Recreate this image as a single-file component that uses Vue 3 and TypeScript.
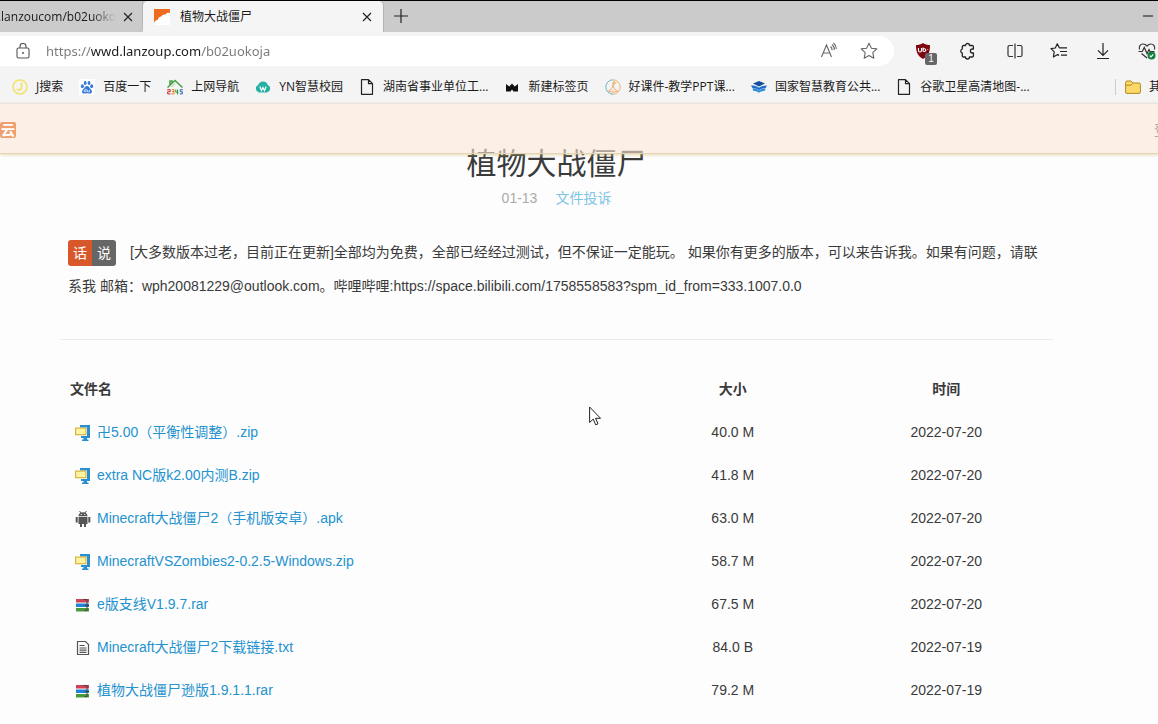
<script setup lang="ts">
import { ref } from 'vue'

type BookmarkIcon = 'j' | 'paw' | 'house' | 'cloud' | 'page' | 'crown' | 'ring' | 'book'
type FileKind = 'zip' | 'apk' | 'rar' | 'txt'

interface Bookmark {
  icon: BookmarkIcon
  label: string
}

interface FileRow {
  kind: FileKind
  name: string
  size: string
  date: string
}

const url = ref('https://wwd.lanzoup.com/b02uokoja')

const bookmarks: Bookmark[] = [
  { icon: 'j', label: 'J搜索' },
  { icon: 'paw', label: '百度一下' },
  { icon: 'house', label: '上网导航' },
  { icon: 'cloud', label: 'YN智慧校园' },
  { icon: 'page', label: '湖南省事业单位工...' },
  { icon: 'crown', label: '新建标签页' },
  { icon: 'ring', label: '好课件-教学PPT课...' },
  { icon: 'book', label: '国家智慧教育公共...' },
  { icon: 'page', label: '谷歌卫星高清地图-...' },
]

const files: FileRow[] = [
  { kind: 'zip', name: '卍5.00（平衡性调整）.zip', size: '40.0 M', date: '2022-07-20' },
  { kind: 'zip', name: 'extra NC版k2.00内测B.zip', size: '41.8 M', date: '2022-07-20' },
  { kind: 'apk', name: 'Minecraft大战僵尸2（手机版安卓）.apk', size: '63.0 M', date: '2022-07-20' },
  { kind: 'zip', name: 'MinecraftVSZombies2-0.2.5-Windows.zip', size: '58.7 M', date: '2022-07-20' },
  { kind: 'rar', name: 'e版支线V1.9.7.rar', size: '67.5 M', date: '2022-07-20' },
  { kind: 'txt', name: 'Minecraft大战僵尸2下载链接.txt', size: '84.0 B', date: '2022-07-19' },
  { kind: 'rar', name: '植物大战僵尸逊版1.9.1.1.rar', size: '79.2 M', date: '2022-07-19' },
]
</script>

<template>
  <div class="window">
    <header class="chrome">
      <div class="tabs">
        <div class="tab tab-back">
          <span class="tab-clip"><span class="tab-url">d.lanzoucom/b02uoko</span></span>
          <button class="icon-btn close" type="button" aria-label="关闭标签页">
            <svg width="10" height="10" viewBox="0 0 10 10"><path d="M1 1l8 8M9 1l-8 8" stroke="#222" stroke-width="1.2" /></svg>
          </button>
        </div>
        <div class="tab tab-active">
          <svg width="16" height="16" viewBox="0 0 16 16">
            <rect width="16" height="16" fill="#fff" />
            <path d="M0 0h16v4c-2-.6-3.500 0-4.500 1.600C9.500 5 8 6 7.500 7.600 5.500 7.500 4 9 4 10.800 2 11 .8 12 0 14z" fill="#ee6a1c" />
          </svg>
          <span class="tab-title">植物大战僵尸</span>
          <button class="icon-btn close" type="button" aria-label="关闭标签页">
            <svg width="10" height="10" viewBox="0 0 10 10"><path d="M1 1l8 8M9 1l-8 8" stroke="#222" stroke-width="1.2" /></svg>
          </button>
        </div>
        <button class="icon-btn new-tab" type="button" aria-label="新建标签页">
          <svg width="14" height="14" viewBox="0 0 14 14"><path d="M7 0v14M0 7h14" stroke="#222" stroke-width="1.2" /></svg>
        </button>
        <button class="icon-btn minimize" type="button" aria-label="最小化">
          <svg width="10" height="2" viewBox="0 0 10 2"><path d="M0 1h10" stroke="#111" /></svg>
        </button>
      </div>

      <div class="toolbar">
        <div class="address">
          <svg width="14" height="16" viewBox="0 0 14 16" fill="none" stroke="#555" stroke-width="1.1">
            <rect x="1" y="5" width="12" height="10" rx="1.500" />
            <path d="M4 5V3.500a3 3 0 0 1 6 0V5" />
            <circle cx="7" cy="10" r="1" fill="#555" stroke="none" />
          </svg>
          <input v-model="url" class="url" type="text" aria-label="地址栏" spellcheck="false" />
          <button class="icon-btn" type="button" aria-label="大声朗读">
            <svg width="18" height="18" viewBox="0 0 18 18" fill="none" stroke="#666" stroke-width="1.1">
              <path d="M1.500 15L6.500 3l5 12M3.200 11h6.600M10.500 4.500c1.200 1 1.600 2.200 1.600 3.800M12 2.500c1.800 1.500 2.400 3.200 2.400 5.500M13.500 1c1.800 1.500 2.800 3.500 2.900 6" />
            </svg>
          </button>
          <button class="icon-btn" type="button" aria-label="收藏此页">
            <svg width="18" height="18" viewBox="0 0 18 18" fill="none" stroke="#666" stroke-width="1.1" stroke-linejoin="round">
              <path d="M9 1.200l2.400 5 5.400.7-4 3.800 1 5.500L9 13.500l-4.800 2.700 1-5.500-4-3.800 5.400-.7z" />
            </svg>
          </button>
        </div>
        <div class="actions">
          <button class="icon-btn blocker" type="button" aria-label="内容拦截">
            <svg width="16" height="16" viewBox="0 0 16 16">
              <path d="M8 0c2 1.500 4.500 2 7 2 0 7-1.500 11-7 14C2.500 13 1 9 1 2c2.500 0 5-.5 7-2z" fill="#800610" />
              <path d="M3.500 5v2.500a1.500 1.500 0 0 0 3 0V5M8 4.500v4M8 7a1.400 1.400 0 1 1 0 .2M12.500 6.500h.6" fill="none" stroke="#fff" stroke-width="1.1" />
            </svg>
            <span class="count">1</span>
          </button>
          <button class="icon-btn" type="button" aria-label="扩展">
            <svg width="18" height="18" viewBox="0 0 18 18" fill="none" stroke="#222" stroke-width="1.3" stroke-linejoin="round">
              <path d="M5.500 3.500h2a2 2 0 0 1 4 0h2.700a1.200 1.200 0 0 1 1.200 1.200V7h-1a2 2 0 0 0 0 4h1v2.800a1.200 1.200 0 0 1-1.200 1.200h-2.700a2 2 0 0 1-4 0h-2a1.200 1.200 0 0 1-1.200-1.200v-2.600a2.200 2.200 0 0 1 0-4.200V4.700a1.200 1.200 0 0 1 1.200-1.200z" />
            </svg>
          </button>
          <span class="divider"></span>
          <button class="icon-btn" type="button" aria-label="拆分屏幕">
            <svg width="18" height="18" viewBox="0 0 18 18" fill="none" stroke="#333" stroke-width="1.2">
              <path d="M7 3.500H3.500A1.500 1.500 0 0 0 2 5v8a1.500 1.500 0 0 0 1.500 1.500H7M11 3.500h3.500A1.500 1.500 0 0 1 16 5v8a1.500 1.500 0 0 1-1.500 1.500H11M9 1.500v15" />
            </svg>
          </button>
          <button class="icon-btn" type="button" aria-label="收藏夹">
            <svg width="18" height="18" viewBox="0 0 18 18" fill="none" stroke="#222" stroke-width="1.2" stroke-linejoin="round">
              <path d="M10.500 5.800H9.300L7.300 1.800 5.300 6 1 6.700l3.200 3.200-.8 5.100 4.200-2.400 1.500.8M10.500 5.800h6.500M10 9.500h7M11 13.200h6" />
            </svg>
          </button>
          <button class="icon-btn" type="button" aria-label="下载">
            <svg width="18" height="18" viewBox="0 0 18 18" fill="none" stroke="#222" stroke-width="1.2">
              <path d="M9 1v12M4 8.300l5 5 5-5M3 16.500h12" />
            </svg>
          </button>
          <button class="icon-btn" type="button" aria-label="浏览器概要">
            <svg width="18" height="18" viewBox="0 0 18 18" fill="none" stroke="#333" stroke-width="1.200">
              <path d="M1.500 7.500C.5 4.500 2.500 2 5 2c1.800 0 3 .8 4 2 1-1.200 2.200-2 4-2 2.500 0 4.500 2.500 3.500 5.500M3.500 11.500L9 16M.5 9.500h3.800l2-4 2.700 6 2-4 1 2h4.500" />
              <circle cx="13.500" cy="13.500" r="4" fill="#15803d" stroke="none" />
              <path d="M11.700 13.600l1.300 1.200 2.300-2.400" stroke="#fff" />
            </svg>
          </button>
        </div>
      </div>

      <nav class="bookmarks" aria-label="收藏夹栏">
        <a v-for="mark in bookmarks" :key="mark.label" class="bookmark" href="#">
          <svg width="16" height="16" viewBox="0 0 16 16">
            <g v-if="mark.icon === 'j'" fill="none" stroke="#f1e36a">
              <circle cx="8" cy="8" r="7" stroke-width="1.600" />
              <path d="M9.500 3.500v5.500a2.500 2.500 0 0 1-4.500 1" stroke-width="1.800" />
            </g>
            <g v-else-if="mark.icon === 'paw'" fill="#3478dc">
              <rect width="16" height="16" fill="#fff" />
              <ellipse cx="3.400" cy="7.200" rx="1.500" ry="1.900" />
              <ellipse cx="6.200" cy="4" rx="1.400" ry="2" />
              <ellipse cx="10" cy="4" rx="1.400" ry="2" />
              <ellipse cx="12.700" cy="7.200" rx="1.500" ry="1.900" />
              <path d="M8 7c2 0 2.500 2 3.800 3.200 1.800 1.600 1.400 4.400-.9 4.400-1 0-2-.4-2.900-.4s-1.900.4-2.900.4c-2.300 0-2.700-2.800-.9-4.400C5.500 9 6 7 8 7z" />
              <path d="M7 9.800v3h-.9a1 1 0 0 1 0-2H7M8.500 10.800v2h2v-2" fill="none" stroke="#fff" stroke-width=".7" />
            </g>
            <g v-else-if="mark.icon === 'house'" fill="none">
              <path d="M.5 8.500L8 1.500l7.500 7M3 6V2h2v2" stroke="#43a047" stroke-width="1.500" />
              <path d="M8 4.500L4.500 8" stroke="#9ccc65" />
              <path d="M.2 10.700h3v2h-2.500v2.200h2.800" stroke="#c62828" />
              <path d="M4.800 10.700h2.200v4.200H4.500M5 12.700h2" stroke="#ef7d1a" />
              <path d="M8.800 10.500v2.700h2.700M10.500 10.500v5" stroke="#2f9e44" />
              <path d="M15.800 10.700h-2.600v2h2.200v2.200h-2.700" stroke="#2b6cb0" />
            </g>
            <g v-else-if="mark.icon === 'cloud'">
              <path d="M4 13.500a3.900 3.900 0 0 1-.8-7.400 5 5 0 0 1 9.600 0 3.900 3.900 0 0 1-.8 7.400z" fill="#26b0a4" />
              <path d="M4.800 7.500l1.700 4L8 8.500l1.500 3 1.700-4" fill="none" stroke="#fff" stroke-width="1.200" />
            </g>
            <path v-else-if="mark.icon === 'page'" d="M2.500.7h7l4 4v10.600h-11zM9.500.7v4h4" fill="none" stroke="#222" stroke-width="1.200" stroke-linejoin="round" />
            <path v-else-if="mark.icon === 'crown'" d="M2 5l3.300 2.500L8 4.500l2.700 3L14 5v7.500H9.500L8 10.500l-1.500 2H2z" fill="#111" />
            <g v-else-if="mark.icon === 'ring'" fill="none">
              <path d="M8 .8a7.200 7.200 0 0 1 0 14.400" stroke="#f0b070" />
              <path d="M8 15.200A7.200 7.200 0 0 1 8 .8" stroke="#6fb4bd" />
              <path d="M3.500 12c2.500-1 4-3.500 4.500-6.500.5 3.500 2 5.500 4.500 6.500-3 1.500-6 1.500-9 0z" stroke="#efa878" fill="#fdebd2" />
              <circle cx="9" cy="4" r="1.200" stroke="#f0a04b" />
            </g>
            <g v-else>
              <path d="M8 2l6 2.500L8 7.500l-6-3z" fill="#174f9c" />
              <path d="M0 6.500c3 0 6 .5 8 2.200 2-1.700 5-2.200 8-2.200L14.500 9.200c-3 0-5 .8-6.500 2-1.500-1.200-3.500-2-6.500-2z" fill="#1f6fca" />
              <path d="M1.500 9.500c3 0 5 .7 6.500 2 1.500-1.300 3.500-2 6.500-2l-1 2.500c-2.500 0-4 .5-5.500 1.700C6.500 12.500 5 12 2.500 12z" fill="#2c8de0" />
            </g>
          </svg>
          <span>{{ mark.label }}</span>
        </a>
        <span class="more">
          <a class="bookmark" href="#">
            <svg width="16" height="16" viewBox="0 0 16 16">
              <path d="M.6 3.500A1.500 1.500 0 0 1 2 2h4l2 2h6a1.400 1.400 0 0 1 1.400 1.400V13a1.400 1.400 0 0 1-1.400 1.400H2A1.400 1.400 0 0 1 .6 13z" fill="#fbd867" stroke="#b18a1e" />
              <path d="M.8 6.200h5.400L8 4.300" fill="none" stroke="#b18a1e" />
            </svg>
            <span>其他收藏夹</span>
          </a>
        </span>
      </nav>
    </header>

    <main class="page">
      <div class="site-bar">
        <a class="brand" href="#" aria-label="蓝奏云"><span>云</span></a>
        <a class="login" href="#">登录</a>
      </div>

      <div class="content">
        <h1>植物大战僵尸</h1>
        <p class="meta"><span>01-13</span><a href="#">文件投诉</a></p>

        <p class="notice">
          <span class="badge"><span class="badge-a">话</span><span class="badge-b">说</span></span>[大多数版本过老，目前正在更新]全部均为免费，全部已经经过测试，但不保证一定能玩。 如果你有更多的版本，可以来告诉我。如果有问题，请联系我 邮箱：wph20081229@outlook.com。哔哩哔哩:https://space.bilibili.com/1758558583?spm_id_from=333.1007.0.0
        </p>

        <table class="files">
          <thead>
            <tr>
              <th class="name" scope="col">文件名</th>
              <th scope="col">大小</th>
              <th scope="col">时间</th>
            </tr>
          </thead>
          <tbody>
            <tr v-for="file in files" :key="file.name">
              <td class="name">
                <a class="file" href="#">
                  <svg width="16" height="16" viewBox="0 0 16 16">
                    <g v-if="file.kind === 'zip'">
                      <path d="M5 0h10v13h-3v1.500h1.500V16H7v-1.500h1.500V13H6v-2h6V2.500H5z" fill="#2a8fd0" />
                      <rect x=".6" y="3.100" width="10.300" height="6.600" fill="#fdf3a0" stroke="#d9b441" stroke-width="1.200" />
                    </g>
                    <g v-else-if="file.kind === 'apk'" fill="#555">
                      <path d="M3.500 5a4.500 3.800 0 0 1 9 0zM3.500 5.700h9V13h-9zM.7 6h2v5.500h-2zM13.300 6h2v5.500h-2zM5 13h2v3H5zM9 13h2v3H9z" />
                      <path d="M4.500 0l1.500 2M11.500 0L10 2" stroke="#555" />
                      <path d="M5.700 3h1v1h-1zM9.300 3h1v1h-1z" fill="#fff" />
                    </g>
                    <g v-else-if="file.kind === 'rar'">
                      <path d="M1 2h13v3.500H1z" fill="#cf4354" />
                      <path d="M1 6.500h13V10H1z" fill="#1f84d6" />
                      <path d="M1 11h13v3.500H1z" fill="#4a9a3c" />
                      <path d="M8.500 2.500h3.500v11H9.500M10 8.500h4" fill="none" stroke="#444" />
                    </g>
                    <g v-else fill="none" stroke="#555" stroke-width="1.200">
                      <path d="M2.500 1.500h8l3 3v10h-11z" />
                      <path d="M4.500 5.500h5M4.500 8h7M4.500 10.200h7M4.500 12.400h7" />
                    </g>
                  </svg>
                  <span>{{ file.name }}</span>
                </a>
              </td>
              <td>{{ file.size }}</td>
              <td>{{ file.date }}</td>
            </tr>
          </tbody>
        </table>
      </div>
    </main>

    <svg class="pointer" width="13" height="20" viewBox="0 0 13 20">
      <path d="M.6 1v15.500l3.600-3.400 2.500 5.700 2.300-1-2.500-5.500h5z" fill="#fff" stroke="#222" />
    </svg>
  </div>
</template>

<style>
body {
  margin: 0;
  background: #fdfdfd;
}
</style>

<style scoped>
.window {
  position: relative;
  overflow: hidden;
  color: #3a3a3a;
  font: 14px/20px "Liberation Sans", "Noto Sans CJK SC", sans-serif;
}

a {
  color: inherit;
  text-decoration: none;
}

svg {
  flex: none;
}

.icon-btn {
  display: flex;
  flex: none;
  align-items: center;
  justify-content: center;
  width: 24px;
  height: 24px;
  padding: 0;
  border: 0;
  background: none;
}

.chrome {
  border-top: 1px solid #000;
  background: #f4f4f4;
  color: #1a1a1a;
  font: 12px/16px "Open Sans", "Noto Sans CJK SC", sans-serif;
}

.tabs {
  display: flex;
  height: 31px;
  background: #cbcbcb;
}

.tab {
  box-sizing: border-box;
  display: flex;
  flex: none;
  align-items: center;
}

.tab-back {
  width: 143px;
  padding-right: 2px;
  border-right: 1px solid #b4b4b4;
  border-radius: 0 0 5px 0;
}

.tab-clip {
  display: flex;
  flex: 1;
  justify-content: flex-end;
  overflow: hidden;
  white-space: nowrap;
  mask-image: linear-gradient(to left, transparent, #000 24px);
}

.tab-url {
  flex: none;
}

.tab-active {
  width: 241px;
  padding: 0 4px 0 11px;
  border-right: 1px solid #b4b4b4;
  border-radius: 5px 5px 0 0;
  background: #f5f5f5;
}

.tab-title {
  flex: 1;
  padding-left: 10px;
}

.new-tab {
  margin: 3px 0 0 5px;
}

.minimize {
  margin: 3px -2px 0 auto;
}

.toolbar {
  display: flex;
  align-items: center;
  height: 38px;
}

.address {
  box-sizing: border-box;
  display: flex;
  flex: 1;
  align-items: center;
  height: 30px;
  padding: 0 13px 0 16px;
  border-radius: 0 15px 15px 0;
  background: #fff;
}

.url {
  flex: 1;
  min-width: 0;
  height: 24px;
  margin-left: 16px;
  padding: 0;
  border: 0;
  outline: 0;
  background: linear-gradient(90deg, #777 45px, #1a1a1a 45px, #1a1a1a 155px, #777 155px) text;
  color: transparent;
  font: 13px/24px "Noto Sans", sans-serif;
}

.address .icon-btn + .icon-btn {
  margin-left: 16px;
}

.actions {
  display: flex;
  flex: none;
  align-items: center;
  gap: 20px;
  width: 247px;
  padding-left: 17px;
}

.divider {
  width: 1px;
  height: 16px;
  margin: 0 -8px;
  background: #ccc;
}

.blocker {
  position: relative;
}

.count {
  position: absolute;
  right: -2px;
  bottom: -2px;
  width: 12px;
  border-radius: 2px;
  background: #666;
  color: #fff;
  font-size: 10px;
  line-height: 12px;
}

.bookmarks {
  display: flex;
  align-items: center;
  gap: 16px;
  height: 33px;
  padding-left: 12px;
  overflow: hidden;
  white-space: nowrap;
}

.bookmark {
  display: flex;
  flex: none;
  align-items: center;
  gap: 8px;
}

.more {
  flex: none;
  width: 33px;
  margin-left: auto;
  padding-left: 9px;
  border-left: 1px solid #ccc;
}

.page {
  position: relative;
  padding: 43px 105px 0 60px;
}

.site-bar {
  position: absolute;
  z-index: 1;
  top: 0;
  right: 0;
  left: 0;
  box-sizing: border-box;
  display: flex;
  align-items: center;
  justify-content: space-between;
  height: 51px;
  padding-top: 2px;
  border-top: 1px solid #e9e4e0;
  border-bottom: 1px solid #e3d5b4;
  background: rgb(252 232 215 / 60%);
  box-shadow: 0 1px 3px rgb(214 190 130 / 60%);
}

.brand {
  width: 16px;
  border-radius: 2px;
  background: #f0a070;
  color: #fff;
  font-size: 14px;
  font-weight: 700;
  line-height: 16px;
  text-align: center;
}

.login {
  width: 4px;
  overflow: hidden;
  color: #aaa;
  white-space: nowrap;
}

h1 {
  margin: 0;
  font-size: 30px;
  font-weight: 400;
  line-height: 36px;
  text-align: center;
}

.meta {
  display: flex;
  justify-content: center;
  gap: 18px;
  margin: 6px 0 0;
  color: #aaa;
}

.meta a {
  color: #7cc4e4;
}

.notice {
  margin: 27px 0 0;
  padding: 0 8px 36px;
  border-bottom: 1px solid #ececec;
  line-height: 34px;
}

.badge {
  display: inline-flex;
  margin-right: 14px;
  overflow: hidden;
  border-radius: 3px;
  color: #fff;
  line-height: 26px;
  text-align: center;
  vertical-align: middle;
}

.badge span {
  width: 24px;
}

.badge-a {
  background: #d9582b;
}

.badge-b {
  background: #666;
}

.files {
  width: 100%;
  margin-top: 27px;
  border-collapse: collapse;
  table-layout: fixed;
}

.files th,
.files td {
  box-sizing: border-box;
  height: 43px;
  padding: 0;
  text-align: center;
}

.files .name {
  width: 57%;
  text-align: left;
}

.files th.name {
  padding-left: 10px;
}

.file {
  display: flex;
  align-items: center;
  gap: 6px;
  padding-left: 15px;
  color: #2492cf;
}

.file svg {
  margin-top: 2px;
}

.pointer {
  position: absolute;
  top: 406px;
  left: 589px;
}
</style>
